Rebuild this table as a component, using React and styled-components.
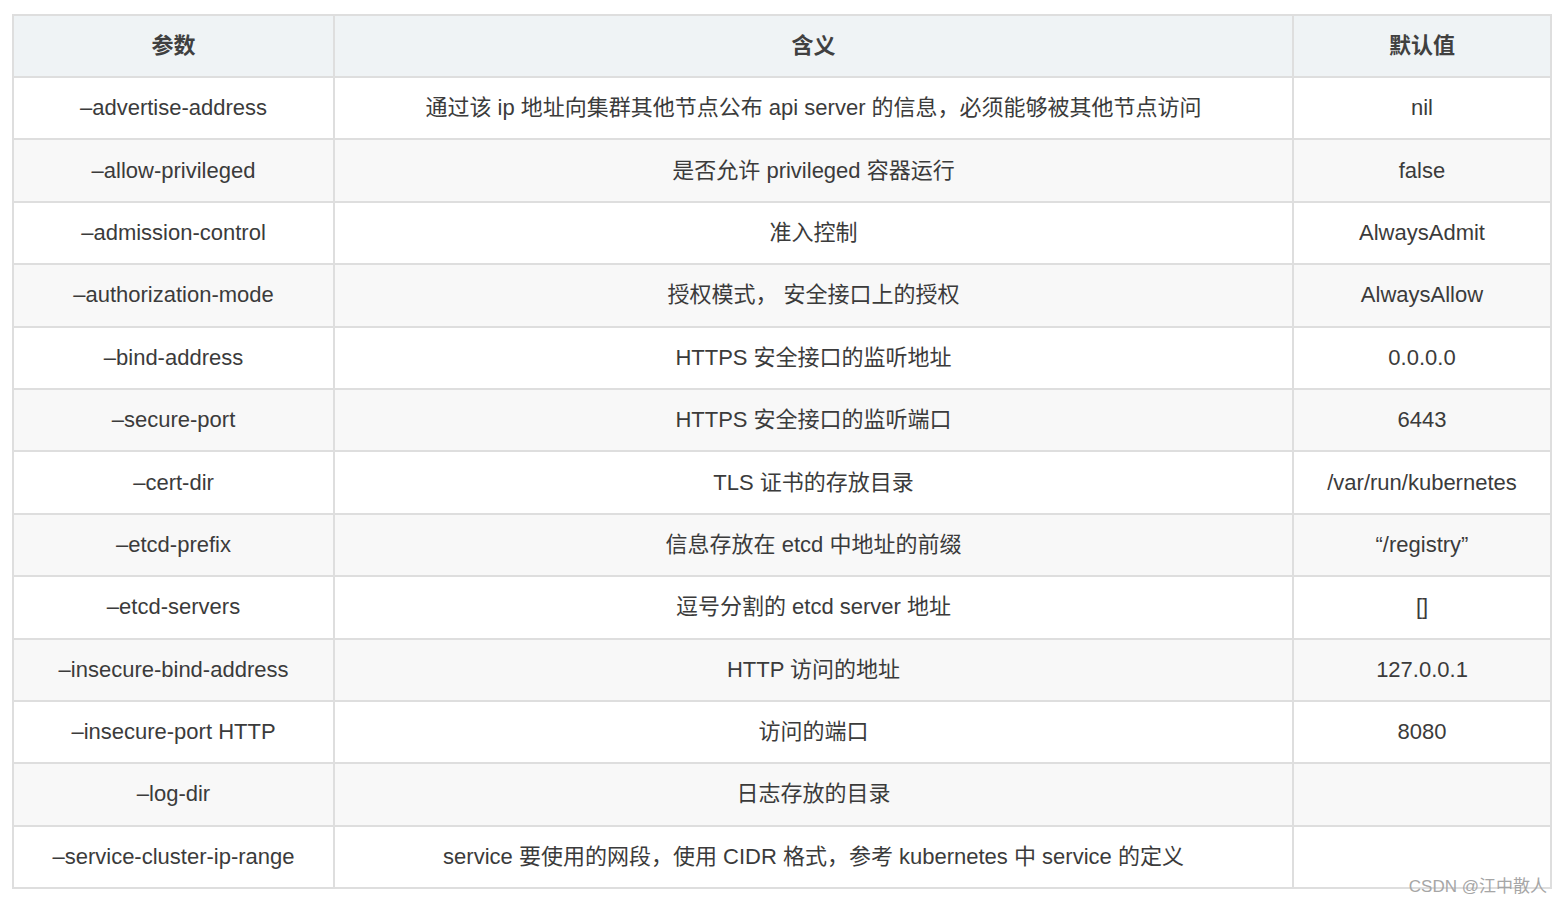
import React from 'react'
import styled, { createGlobalStyle } from 'styled-components'

const rows = [
  ['–advertise-address', '通过该 ip 地址向集群其他节点公布 api server 的信息，必须能够被其他节点访问', 'nil'],
  ['–allow-privileged', '是否允许 privileged 容器运行', 'false'],
  ['–admission-control', '准入控制', 'AlwaysAdmit'],
  ['–authorization-mode', '授权模式， 安全接口上的授权', 'AlwaysAllow'],
  ['–bind-address', 'HTTPS 安全接口的监听地址', '0.0.0.0'],
  ['–secure-port', 'HTTPS 安全接口的监听端口', '6443'],
  ['–cert-dir', 'TLS 证书的存放目录', '/var/run/kubernetes'],
  ['–etcd-prefix', '信息存放在 etcd 中地址的前缀', '“/registry”'],
  ['–etcd-servers', '逗号分割的 etcd server 地址', '[]'],
  ['–insecure-bind-address', 'HTTP 访问的地址', '127.0.0.1'],
  ['–insecure-port HTTP', '访问的端口', '8080'],
  ['–log-dir', '日志存放的目录', ''],
  ['–service-cluster-ip-range', 'service 要使用的网段，使用 CIDR 格式，参考 kubernetes 中 service 的定义', ''],
]

function App() {
  return (
    <Page>
      <GlobalStyle />
      <Table>
        <colgroup>
          <col style={{ width: 321 }} />
          <col style={{ width: 959 }} />
          <col style={{ width: 258 }} />
        </colgroup>
        <thead>
          <tr>
            <Th>参数</Th>
            <Th>含义</Th>
            <Th>默认值</Th>
          </tr>
        </thead>
        <tbody>
          {rows.map((r, i) => (
            <Row key={i} $striped={i % 2 === 1}>
              <Td>{r[0]}</Td>
              <Td>{r[1]}</Td>
              <Td>{r[2]}</Td>
            </Row>
          ))}
        </tbody>
      </Table>
      <Watermark>CSDN @江中散人</Watermark>
    </Page>
  )
}

export default App

const GlobalStyle = createGlobalStyle`
  body {
    margin: 0;
    background: #fff;
    font-family: "Liberation Sans", "Noto Sans CJK SC", sans-serif;
  }
`

const Page = styled.div`
  position: relative;
  width: 1562px;
  height: 902px;
  padding: 14px 12px 0;
  box-sizing: border-box;
`

const Table = styled.table`
  width: 1538px;
  table-layout: fixed;
  border-collapse: collapse;
  border: 2px solid #dedede;
  color: #3b3b3b;
  font-size: 22px;
  line-height: 24px;
`

const Th = styled.th`
  height: 60px;
  padding: 0;
  background: #eff3f5;
  border: 2px solid #dedede;
  font-weight: bold;
  color: #404040;
  text-align: center;
`

const Row = styled.tr`
  background: ${p => (p.$striped ? '#f8f8f8' : '#fff')};
`

const Td = styled.td`
  height: 60.4px;
  padding: 0;
  border: 2px solid #dedede;
  text-align: center;
  white-space: nowrap;
`

const Watermark = styled.div`
  position: absolute;
  right: 15px;
  top: 872px;
  font-size: 17px;
  color: #a6a6a6;
  font-family: "Liberation Sans", "Noto Sans CJK SC", sans-serif;
`
